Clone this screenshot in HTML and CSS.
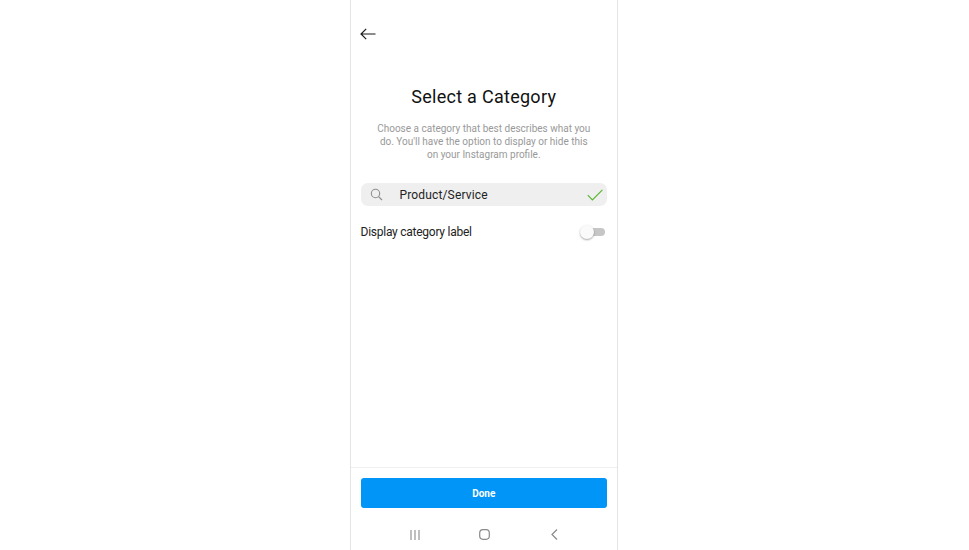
FILE: index.html
```html
<!DOCTYPE html>
<html lang="en">
<head>
<meta charset="utf-8">
<title>Select a Category</title>
<link rel="stylesheet" href="styles.css">
</head>
<body>
<main class="phone">
  <header class="topbar">
    <svg class="back" width="16" height="12" viewBox="0 0 16 12"><path d="M15.5 6H1M6.2 .8 1 6l5.2 5.2" fill="none" stroke="#1a1a1a" stroke-width="1.2"/></svg>
  </header>
  <section class="content">
    <h1 class="title">Select a Category</h1>
    <p class="desc">Choose a category that best describes what you do. You'll have the option to display or hide this on your Instagram profile.</p>
    <div class="search">
      <svg class="search-icon" width="13" height="13" viewBox="0 0 13 13"><circle cx="5.5" cy="5.5" r="4.2" fill="none" stroke="#8e8e8e" stroke-width="1.1"/><path d="M8.6 8.6 12 12" stroke="#8e8e8e" stroke-width="1.2"/></svg>
      <span class="search-text">Product/Service</span>
      <svg class="check" width="16" height="12" viewBox="0 0 16 12"><path d="M.8 6.2 5.4 11 15.4 .8" fill="none" stroke="#55b52c" stroke-width="1.1"/></svg>
    </div>
    <div class="label-row">
      <span>Display category label</span>
      <span class="switch"><span class="knob"></span></span>
    </div>
  </section>
  <footer class="footer">
    <div class="action"><button class="done">Done</button></div>
    <nav class="navbar">
      <svg width="10" height="10" viewBox="0 0 10 10"><path d="M1 0v10M5 0v10M9 0v10" stroke="#8a8a8a" stroke-width="1.1"/></svg>
      <svg width="11" height="11" viewBox="0 0 11 11"><rect x=".7" y=".7" width="9.6" height="9.6" rx="3.2" fill="none" stroke="#8a8a8a" stroke-width="1.2"/></svg>
      <svg width="9" height="11" viewBox="-2 0 9 11"><path d="M6 .5 1 5.5l5 5" fill="none" stroke="#8a8a8a" stroke-width="1.2"/></svg>
    </nav>
  </footer>
</main>
</body>
</html>
```
FILE: styles.css
```css
* { box-sizing: border-box; }
html, body { margin: 0; height: 100%; background: #fff; overflow: hidden; }
body { display: flex; justify-content: center; font-family: Roboto, "Liberation Sans", sans-serif; }
.phone {
  width: 268px; height: 550px; margin-left: -1px;
  border-left: 1px solid #e4e4e4; border-right: 1px solid #e4e4e4;
  display: flex; flex-direction: column; background: #fff;
}
.topbar { height: 68px; padding: 28px 0 0 9px; }
.back { display: block; }
.content { flex: 1; padding: 0 10px 0 9.5px; }
.title { margin: 18px 0 0; font-size: 18px; line-height: 22px; font-weight: 400; text-align: center; color: #111; letter-spacing: .28px; }
.desc { margin: 14px 16px 0; font-size: 10px; line-height: 13px; text-align: center; color: #999; }
.search { margin-top: 22px; height: 23px; background: #efefef; border-radius: 7px; display: flex; align-items: center; padding: 0 4px 0 9px; }
.search-icon { flex: none; }
.search-text { margin-left: 17px; flex: 1; font-size: 12px; color: #222; letter-spacing: .15px; }
.label-row { margin-top: 14px; height: 24px; display: flex; align-items: center; justify-content: space-between; padding-right: 2px; font-size: 12px; letter-spacing: -.25px; color: #222; }
.switch { position: relative; width: 24px; height: 8px; border-radius: 4px; background: #c6c6c6; }
.knob { position: absolute; left: -1px; top: -3px; width: 14px; height: 14px; border-radius: 50%; background: #fafafa; box-shadow: 0 1px 2px rgba(0,0,0,.35); }
.footer { flex: none; border-top: 1px solid #f0f0f0; }
.action { padding: 10px 10px 0 9.5px; }
.done { display: block; width: 100%; height: 30px; border: 0; border-radius: 3px; background: #0095f6; color: #fff; font: 700 10px Roboto, "Liberation Sans", sans-serif; }
.navbar { height: 42px; display: flex; align-items: center; justify-content: space-between; padding: 11px 59px 0 59px; }
```
